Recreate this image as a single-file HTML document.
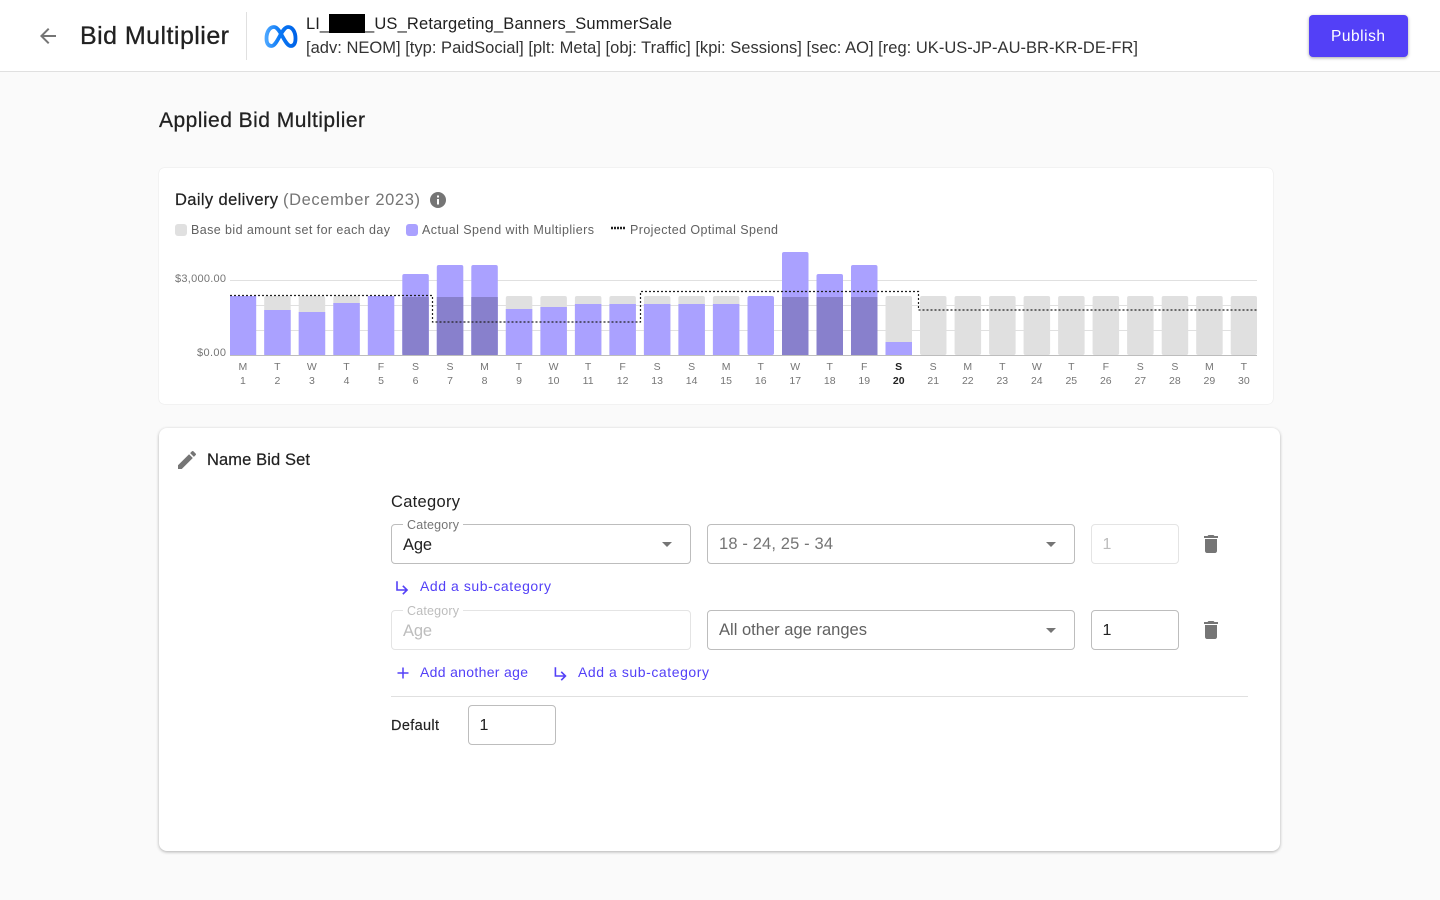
<!DOCTYPE html>
<html lang="en">
<head>
<meta charset="utf-8">
<title>Bid Multiplier</title>
<style>
html,body{margin:0;padding:0;width:1440px;height:900px;overflow:hidden;background:#fafafa}
body{position:relative;font-family:"Liberation Sans",sans-serif}
.box{position:absolute;box-sizing:border-box}
.hd{left:0;top:0;width:1440px;height:72px;background:#fff;border-bottom:1px solid #e0e0e0}
.vr{left:246px;top:12px;width:1px;height:48px;background:#e0e0e0}
.btn{left:1309px;top:15px;width:99px;height:42px;background:#5340f7;border-radius:4px;box-shadow:0 1px 3px rgba(0,0,0,.35)}
.c1{left:159px;top:168px;width:1114px;height:236px;background:#fff;border-radius:5px;box-shadow:0 0 1px rgba(0,0,0,.2)}
.c2{left:159px;top:428px;width:1121px;height:423px;background:#fff;border-radius:8px;box-shadow:0 1px 3px rgba(0,0,0,.3)}
.f{height:40px;border:1px solid #bdbdbd;border-radius:4px;background:#fff}
.d{border-color:#e4e4e4}
.n{height:4px;background:#fff}
.hr{left:391px;top:696px;width:857px;height:1px;background:#e0e0e0}
svg{position:absolute;left:0;top:0}
text{font-family:"Liberation Sans",sans-serif}
</style>
</head>
<body>
<div class="box hd"></div>
<div class="box vr"></div>
<div class="box btn"></div>
<div class="box c1"></div>
<div class="box c2"></div>
<div class="box f" style="left:391px;top:524px;width:300px"></div>
<div class="box n" style="left:403px;top:522px;width:60px"></div>
<div class="box f" style="left:707px;top:524px;width:368px"></div>
<div class="box f d" style="left:1091px;top:524px;width:88px"></div>
<div class="box f d" style="left:391px;top:610px;width:300px"></div>
<div class="box n" style="left:403px;top:608px;width:60px"></div>
<div class="box f" style="left:707px;top:610px;width:368px"></div>
<div class="box f" style="left:1091px;top:610px;width:88px"></div>
<div class="box hr"></div>
<div class="box f" style="left:468px;top:705px;width:88px"></div>

<svg width="1440" height="900" viewBox="0 0 1440 900">
<defs>
<linearGradient id="m" x1="0" y1="0" x2="1" y2="0"><stop offset="0" stop-color="#4aa5ff"/><stop offset=".45" stop-color="#0a78f5"/><stop offset="1" stop-color="#0064e8"/></linearGradient>
</defs>

<!-- header -->
<path transform="translate(36,24)" fill="#757575" d="M20 11H7.83l5.59-5.59L12 4l-8 8 8 8 1.41-1.41L7.83 13H20v-2z"/>
<text x="80" y="44" font-size="25" fill="#212121" stroke="#212121" stroke-width=".3" textLength="149">Bid Multiplier</text>
<path d="M266.500 38.500c0-6.500 3-11.500 7.500-11.500 6.500 0 10.500 19 17 19 3 0 4.500-3 4.500-7.500 0-6.500-3-11.500-7.500-11.500-6.500 0-10.500 19-16.500 19-3.200 0-5-2.700-5-7.500z" fill="none" stroke="url(#m)" stroke-width="3.800"/>
<text x="306" y="29" font-size="16.500" fill="#212121" textLength="23">LI_</text>
<rect x="329" y="14" width="36" height="19" fill="#000"/>
<text x="365" y="29" font-size="16.500" fill="#212121" textLength="307">_US_Retargeting_Banners_SummerSale</text>
<text x="306" y="53" font-size="16.500" fill="#333" textLength="832">[adv: NEOM] [typ: PaidSocial] [plt: Meta] [obj: Traffic] [kpi: Sessions] [sec: AO] [reg: UK-US-JP-AU-BR-KR-DE-FR]</text>
<text x="1331" y="41" font-size="15.500" fill="#fff" textLength="54">Publish</text>

<text x="159" y="127" font-size="21" fill="#212121" stroke="#212121" stroke-width=".25" textLength="206">Applied Bid Multiplier</text>

<!-- chart heading -->
<text x="175" y="205" font-size="16.500" fill="#212121" stroke="#212121" stroke-width=".2" textLength="103">Daily delivery</text>
<text x="283" y="205" font-size="16.500" fill="#757575" textLength="137">(December 2023)</text>
<circle cx="438" cy="200" r="8" fill="#757575"/>
<rect x="437" y="199" width="2" height="5.500" fill="#fff"/><rect x="437" y="195.500" width="2" height="2" fill="#fff"/>

<rect x="175" y="224" width="12" height="12" rx="3" fill="#e0e0e0"/>
<text x="191" y="234" font-size="12.500" fill="#616161" textLength="199">Base bid amount set for each day</text>
<rect x="406" y="224" width="12" height="12" rx="3" fill="#aaa1ff"/>
<text x="422" y="234" font-size="12.500" fill="#616161" textLength="172">Actual Spend with Multipliers</text>
<line x1="611" y1="228" x2="626" y2="228" stroke="#212121" stroke-width="2.600" stroke-dasharray="2 1"/>
<text x="630" y="234" font-size="12.500" fill="#616161" textLength="148">Projected Optimal Spend</text>

<text x="175" y="282" font-size="11" fill="#757575" textLength="51">$3,000.00</text>
<text x="197" y="356" font-size="11" fill="#757575" textLength="29">$0.00</text>

<g stroke="#e0e0e0" stroke-width="1">
<line x1="230" y1="280.500" x2="1257" y2="280.500"/>
<line x1="230" y1="305.500" x2="1257" y2="305.500"/>
<line x1="230" y1="330.500" x2="1257" y2="330.500"/>
</g>

<!-- base bars -->
<g fill="#e0e0e0" transform="translate(-.3,0)">
<rect x="264.500" y="296" width="26.500" height="59" rx="2"/>
<rect x="299" y="296" width="26.500" height="59" rx="2"/>
<rect x="333.600" y="296" width="26.500" height="59" rx="2"/>
<rect x="506.100" y="296" width="26.500" height="59" rx="2"/>
<rect x="540.700" y="296" width="26.500" height="59" rx="2"/>
<rect x="575.200" y="296" width="26.500" height="59" rx="2"/>
<rect x="609.700" y="296" width="26.500" height="59" rx="2"/>
<rect x="644.200" y="296" width="26.500" height="59" rx="2"/>
<rect x="678.700" y="296" width="26.500" height="59" rx="2"/>
<rect x="713.200" y="296" width="26.500" height="59" rx="2"/>
<rect x="885.800" y="296" width="26.500" height="59" rx="2"/>
<rect x="920.300" y="296" width="26.500" height="59" rx="2"/>
<rect x="954.900" y="296" width="26.500" height="59" rx="2"/>
<rect x="989.400" y="296" width="26.500" height="59" rx="2"/>
<rect x="1023.900" y="296" width="26.500" height="59" rx="2"/>
<rect x="1058.400" y="296" width="26.500" height="59" rx="2"/>
<rect x="1092.900" y="296" width="26.500" height="59" rx="2"/>
<rect x="1127.400" y="296" width="26.500" height="59" rx="2"/>
<rect x="1162" y="296" width="26.500" height="59" rx="2"/>
<rect x="1196.500" y="296" width="26.500" height="59" rx="2"/>
<rect x="1231" y="296" width="26.300" height="59" rx="2"/>
</g>

<!-- spend bars -->
<g fill="#aaa1ff" transform="translate(-.3,0)">
<rect x="230.300" y="296" width="26.200" height="59"/>
<rect x="264.500" y="310" width="26.500" height="45"/>
<rect x="299" y="312" width="26.500" height="43"/>
<rect x="333.600" y="303" width="26.500" height="52"/>
<rect x="368.100" y="296" width="26.500" height="59"/>
<rect x="402.600" y="274" width="26.500" height="81" rx="2"/>
<rect x="437.100" y="265" width="26.500" height="90" rx="2"/>
<rect x="471.600" y="265" width="26.500" height="90" rx="2"/>
<rect x="506.100" y="309" width="26.500" height="46"/>
<rect x="540.700" y="307" width="26.500" height="48"/>
<rect x="575.200" y="304" width="26.500" height="51"/>
<rect x="609.700" y="304" width="26.500" height="51"/>
<rect x="644.200" y="304" width="26.500" height="51"/>
<rect x="678.700" y="304" width="26.500" height="51"/>
<rect x="713.200" y="304" width="26.500" height="51"/>
<rect x="747.800" y="296" width="26.500" height="59" rx="2"/>
<rect x="782.300" y="252" width="26.500" height="103" rx="2"/>
<rect x="816.800" y="274" width="26.500" height="81" rx="2"/>
<rect x="851.300" y="265" width="26.500" height="90" rx="2"/>
<rect x="885.800" y="342" width="26.500" height="13"/>
</g>
<g fill="#8880cc" transform="translate(-.3,0)">
<rect x="402.600" y="297" width="26.500" height="58"/>
<rect x="437.100" y="297" width="26.500" height="58"/>
<rect x="471.600" y="297" width="26.500" height="58"/>
<rect x="782.300" y="297" width="26.500" height="58"/>
<rect x="816.800" y="297" width="26.500" height="58"/>
<rect x="851.300" y="297" width="26.500" height="58"/>
</g>
<line x1="230" y1="355.500" x2="1257" y2="355.500" stroke="#bdbdbd"/>
<path d="M230 295.500H432.500V322H640.500V291.500H918.500V310H1257" fill="none" stroke="#212121" stroke-width="1.200" stroke-dasharray="2 2"/>

<!-- x labels -->
<g font-size="10.500" fill="#757575" text-anchor="middle" transform="translate(-.4,0)">
<text x="243.300" y="370">M</text><text x="243.300" y="384">1</text>
<text x="277.800" y="370">T</text><text x="277.800" y="384">2</text>
<text x="312.300" y="370">W</text><text x="312.300" y="384">3</text>
<text x="346.900" y="370">T</text><text x="346.900" y="384">4</text>
<text x="381.400" y="370">F</text><text x="381.400" y="384">5</text>
<text x="415.900" y="370">S</text><text x="415.900" y="384">6</text>
<text x="450.400" y="370">S</text><text x="450.400" y="384">7</text>
<text x="484.900" y="370">M</text><text x="484.900" y="384">8</text>
<text x="519.400" y="370">T</text><text x="519.400" y="384">9</text>
<text x="554" y="370">W</text><text x="554" y="384">10</text>
<text x="588.500" y="370">T</text><text x="588.500" y="384">11</text>
<text x="623" y="370">F</text><text x="623" y="384">12</text>
<text x="657.500" y="370">S</text><text x="657.500" y="384">13</text>
<text x="692" y="370">S</text><text x="692" y="384">14</text>
<text x="726.500" y="370">M</text><text x="726.500" y="384">15</text>
<text x="761.100" y="370">T</text><text x="761.100" y="384">16</text>
<text x="795.600" y="370">W</text><text x="795.600" y="384">17</text>
<text x="830.100" y="370">T</text><text x="830.100" y="384">18</text>
<text x="864.600" y="370">F</text><text x="864.600" y="384">19</text>
<text x="899.100" y="370" fill="#212121" font-weight="700">S</text><text x="899.100" y="384" fill="#212121" font-weight="700">20</text>
<text x="933.600" y="370">S</text><text x="933.600" y="384">21</text>
<text x="968.200" y="370">M</text><text x="968.200" y="384">22</text>
<text x="1002.700" y="370">T</text><text x="1002.700" y="384">23</text>
<text x="1037.200" y="370">W</text><text x="1037.200" y="384">24</text>
<text x="1071.700" y="370">T</text><text x="1071.700" y="384">25</text>
<text x="1106.200" y="370">F</text><text x="1106.200" y="384">26</text>
<text x="1140.700" y="370">S</text><text x="1140.700" y="384">27</text>
<text x="1175.300" y="370">S</text><text x="1175.300" y="384">28</text>
<text x="1209.800" y="370">M</text><text x="1209.800" y="384">29</text>
<text x="1244.300" y="370">T</text><text x="1244.300" y="384">30</text>
</g>

<!-- form -->
<path transform="translate(175,448)" fill="#757575" d="M3 17.250V21h3.750L17.810 9.940l-3.750-3.750L3 17.250zM20.710 7.040c.39-.39.39-1.020 0-1.410l-2.340-2.340c-.39-.39-1.020-.39-1.410 0l-1.830 1.830 3.750 3.750 1.830-1.830z"/>
<text x="207" y="465" font-size="16.500" fill="#212121" stroke="#212121" stroke-width=".2" textLength="103">Name Bid Set</text>
<text x="391" y="507" font-size="16.500" fill="#212121" textLength="69">Category</text>

<text x="407" y="529" font-size="12.500" fill="#757575" textLength="52">Category</text>
<text x="403" y="550" font-size="16.500" fill="#212121" textLength="29">Age</text>
<path d="M662 542h10l-5 5z" fill="#757575"/>
<text x="719" y="549" font-size="16.500" fill="#757575" textLength="114">18 - 24, 25 - 34</text>
<path d="M1046 542h10l-5 5z" fill="#757575"/>
<text x="1102.500" y="549" font-size="16" fill="#bdbdbd">1</text>
<path transform="translate(1199,532)" fill="#757575" d="M6 19c0 1.100.9 2 2 2h8c1.100 0 2-.9 2-2V7H6v12zM19 4h-3.500l-1-1h-5l-1 1H5v2h14V4z"/>

<path transform="translate(393,578) scale(.8)" fill="#5340f7" d="M19 15l-6 6-1.420-1.420L15.170 16H4V4h2v10h9.170l-3.590-3.580L13 9l6 6z"/>
<text x="420" y="591" font-size="14" fill="#5340f7" textLength="131">Add a sub-category</text>

<text x="407" y="615" font-size="12.500" fill="#bdbdbd" textLength="52">Category</text>
<text x="403" y="636" font-size="16.500" fill="#bdbdbd" textLength="29">Age</text>
<text x="719" y="635" font-size="16.500" fill="#616161" textLength="148">All other age ranges</text>
<path d="M1046 628h10l-5 5z" fill="#757575"/>
<text x="1102.500" y="635" font-size="16" fill="#212121">1</text>
<path transform="translate(1199,618)" fill="#757575" d="M6 19c0 1.100.9 2 2 2h8c1.100 0 2-.9 2-2V7H6v12zM19 4h-3.500l-1-1h-5l-1 1H5v2h14V4z"/>

<path d="M403 667.500v11M397.500 673h11" stroke="#5340f7" stroke-width="1.500" fill="none"/>
<text x="420" y="677" font-size="14" fill="#5340f7" textLength="108">Add another age</text>
<path transform="translate(551.400,664) scale(.8)" fill="#5340f7" d="M19 15l-6 6-1.420-1.420L15.170 16H4V4h2v10h9.170l-3.590-3.580L13 9l6 6z"/>
<text x="578" y="677" font-size="14" fill="#5340f7" textLength="131">Add a sub-category</text>

<text x="391" y="730" font-size="14.500" fill="#212121" stroke="#212121" stroke-width=".15" textLength="48">Default</text>
<text x="479.500" y="730" font-size="16" fill="#212121">1</text>
</svg>
</body>
</html>
